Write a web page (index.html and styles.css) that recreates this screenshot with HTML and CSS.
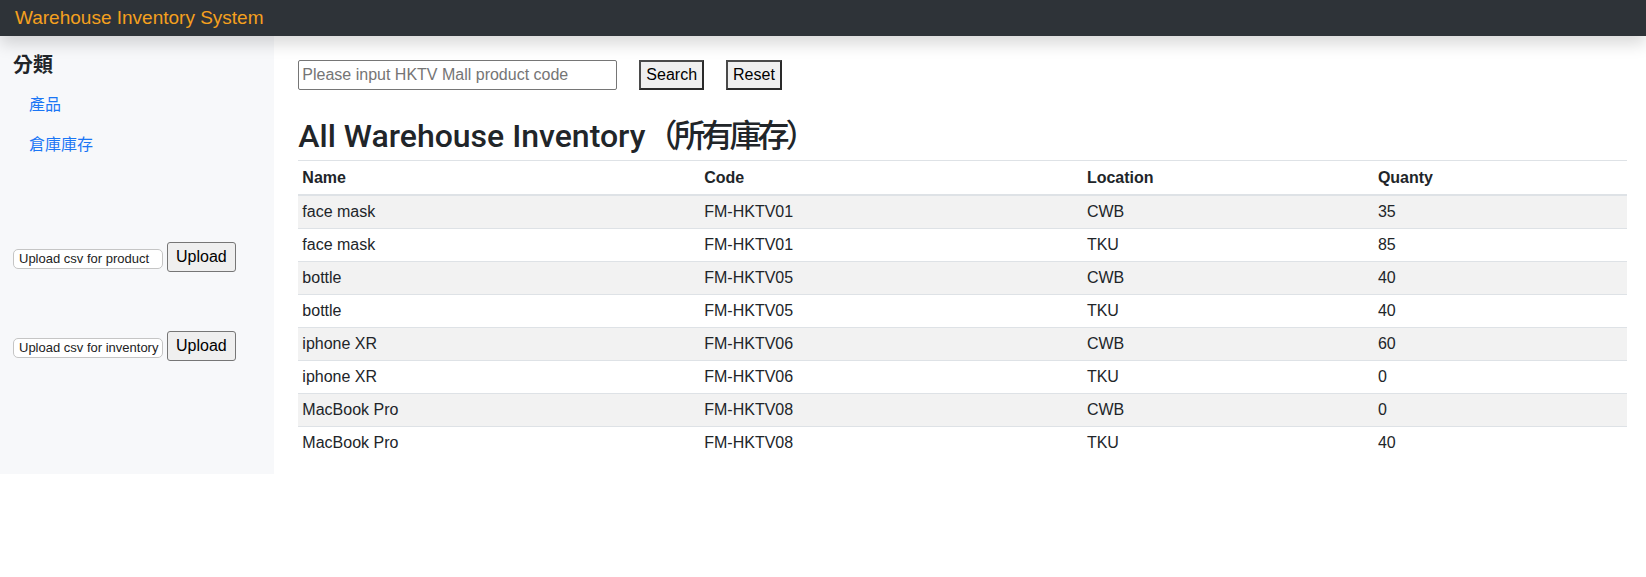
FILE: index.html
```html
<!DOCTYPE html>
<html lang="zh-Hant">
<head>
<meta charset="utf-8">
<title>Warehouse Inventory System</title>
<link rel="stylesheet" href="styles.css">
</head>
<body>
<header class="navbar">
  <a class="brand" href="#">Warehouse Inventory System</a>
</header>
<div class="layout">
  <aside class="sidebar">
    <h5 class="side-title">分類</h5>
    <nav class="side-nav">
      <a class="side-link" href="#">產品</a>
      <a class="side-link" href="#">倉庫庫存</a>
    </nav>
    <div class="uploads">
      <form class="upload-form">
        <span class="file-box">Upload csv for product</span>
        <button type="button" class="upload-btn">Upload</button>
      </form>
      <form class="upload-form">
        <span class="file-box">Upload csv for inventory</span>
        <button type="button" class="upload-btn">Upload</button>
      </form>
    </div>
  </aside>
  <main class="main">
    <form class="search">
      <input class="search-input" type="text" placeholder="Please input HKTV Mall product code">
      <button type="button" class="btn">Search</button>
      <button type="button" class="btn">Reset</button>
    </form>
    <h2 class="title">All Warehouse Inventory<span class="cjk">（所有庫存）</span></h2>
    <table class="inv">
      <thead>
        <tr><th class="c-name">Name</th><th class="c-code">Code</th><th class="c-loc">Location</th><th class="c-qty">Quanty</th></tr>
      </thead>
      <tbody>
        <tr><td>face mask</td><td>FM-HKTV01</td><td>CWB</td><td>35</td></tr>
        <tr><td>face mask</td><td>FM-HKTV01</td><td>TKU</td><td>85</td></tr>
        <tr><td>bottle</td><td>FM-HKTV05</td><td>CWB</td><td>40</td></tr>
        <tr><td>bottle</td><td>FM-HKTV05</td><td>TKU</td><td>40</td></tr>
        <tr><td>iphone XR</td><td>FM-HKTV06</td><td>CWB</td><td>60</td></tr>
        <tr><td>iphone XR</td><td>FM-HKTV06</td><td>TKU</td><td>0</td></tr>
        <tr><td>MacBook Pro</td><td>FM-HKTV08</td><td>CWB</td><td>0</td></tr>
        <tr><td>MacBook Pro</td><td>FM-HKTV08</td><td>TKU</td><td>40</td></tr>
      </tbody>
    </table>
  </main>
</div>
</body>
</html>
```

FILE: styles.css
```css
* { box-sizing: border-box; }

body {
  margin: 0;
  font-family: "Liberation Sans", "Noto Sans CJK TC", sans-serif;
  font-size: 16px;
  line-height: 1.5;
  color: #212529;
  background: #fff;
}

.navbar {
  position: relative;
  z-index: 2;
  height: 36px;
  background: #2e3338;
  display: flex;
  align-items: center;
  padding: 0 15px;
  box-shadow: 0 8px 16px rgba(0, 0, 0, 0.15);
}

.brand {
  color: #f5a01e;
  font-size: 19px;
  line-height: 24px;
  text-decoration: none;
}

.layout {
  display: grid;
  grid-template-columns: 16.6667% 1fr;
}

.sidebar {
  background: #f7f8fa;
  padding: 16px 0 0 13px;
  display: flex;
  flex-direction: column;
}

.side-title {
  margin: 0 0 7px;
  font-family: "Noto Sans CJK TC", sans-serif;
  font-size: 20px;
  font-weight: 700;
  line-height: 24px;
}

.side-nav {
  display: flex;
  flex-direction: column;
}

.side-link {
  padding: 8px 16px;
  font-family: "Noto Sans CJK TC", sans-serif;
  font-size: 16px;
  line-height: 24px;
  color: #1a76f5;
  text-decoration: none;
}

.uploads {
  margin-top: 79px;
  display: flex;
  flex-direction: column;
  gap: 59px;
}

.upload-form {
  margin: 0;
  display: flex;
  align-items: flex-start;
  gap: 4px;
}

.file-box {
  margin-top: 7px;
  width: 150px;
  height: 20px;
  padding: 0 5px;
  background: #fff;
  border: 1px solid #c5c5c5;
  border-radius: 5px;
  font-size: 13px;
  line-height: 18px;
  color: #222;
  white-space: nowrap;
  overflow: hidden;
}

.upload-btn {
  height: 30px;
  padding: 0 8px;
  font-family: "Liberation Sans", sans-serif;
  font-size: 16px;
  color: #000;
  background: #efefef;
  border: 1px solid #767676;
  border-radius: 3px;
}

.main {
  padding: 24px 19px 15px 24px;
  min-width: 0;
}

.search {
  margin: 0 0 21px;
  display: flex;
  align-items: center;
  gap: 22px;
}

.search-input {
  width: 319px;
  height: 30px;
  padding: 1px 3px;
  font-family: "Liberation Sans", sans-serif;
  font-size: 16px;
  color: #212529;
  border: 1px solid #767676;
  border-radius: 2px;
  background: #fff;
}

.search-input::placeholder { color: #757575; }

.btn {
  height: 30px;
  padding: 0 5px;
  font-family: "Liberation Sans", sans-serif;
  font-size: 16px;
  color: #000;
  background: #efefef;
  border: 2px solid;
  border-color: #4a4a4a #2a2a2a #2a2a2a #4a4a4a;
  border-radius: 0;
}

.title {
  margin: 0 0 5px;
  padding-top: 3px;
  font-family: "Roboto", "Noto Sans CJK TC", sans-serif;
  font-size: 32px;
  font-weight: 500;
  line-height: 38.4px;
  color: #212529;
}

.title .cjk {
  font-family: "Noto Sans CJK TC", sans-serif;
  letter-spacing: -4px;
}

.inv {
  width: 100%;
  border-collapse: collapse;
  margin: 0;
}

.inv th,
.inv td {
  padding: 4px;
  line-height: 24px;
  text-align: left;
  vertical-align: top;
}

.inv th {
  padding-top: 5px;
  font-weight: bold;
  border-top: 1px solid #dee2e6;
  border-bottom: 2px solid #dee2e6;
  vertical-align: bottom;
}

.inv td { border-top: 1px solid #dee2e6; }

.inv tbody tr:nth-child(odd) { background: #f2f2f2; }

.c-name { width: 30.25%; }
.c-code { width: 28.8%; }
.c-loc { width: 21.9%; }
.c-qty { width: 19.05%; }
```
